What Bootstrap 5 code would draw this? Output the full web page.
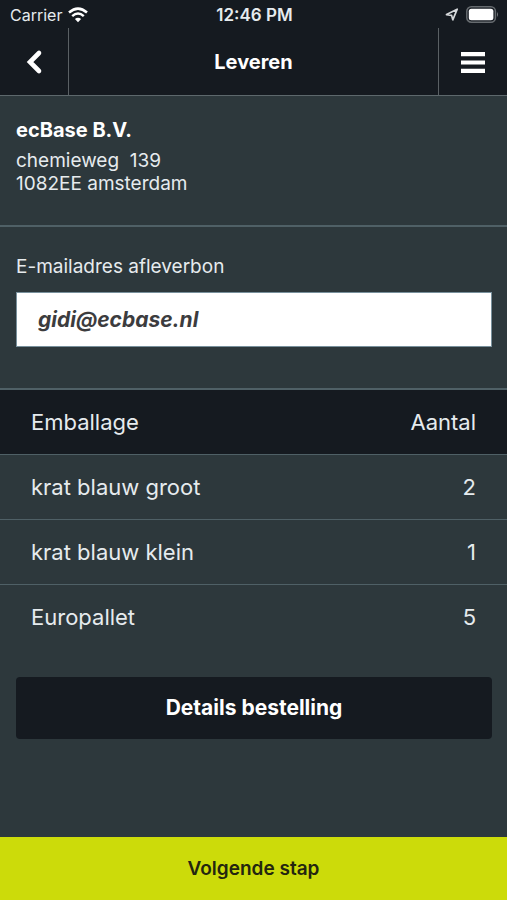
<!DOCTYPE html>
<html lang="nl">
<head>
<meta charset="utf-8">
<meta name="viewport" content="width=device-width, initial-scale=1">
<title>Leveren</title>
<link href="https://cdn.jsdelivr.net/npm/bootstrap@5.3.0/dist/css/bootstrap.min.css" rel="stylesheet">
<style>
  :root { --ink: #151a20; --slate: #2d383c; --rule: #4f6066; --lime: #ccdb0a; --pale: #e6ebee; }
  body { font-family: Inter, "Liberation Sans", sans-serif; background: var(--slate); color: var(--pale); }
  .ink { background: var(--ink); }
  .status { height: 28px; padding: 1px 8px 0 10px; font-size: 16px; line-height: 24px; }
  .status .clock { font-size: 17px; font-weight: 600; }
  .status .side { flex: 1 1 0; }
  .status .left-side { gap: 6px; }
  .topbar { height: 68px; border-bottom: 1px solid #5d686c; }
  .topbar h1 { font-size: 20px; line-height: 24px; font-weight: 700; color: #fff; }
  .topbar .btn { width: 69px; border: 0; border-radius: 0; color: #fff; }
  .topbar .btn-back { border-right: 1px solid #5a6064; }
  .topbar .btn-menu { border-left: 1px solid #5a6064; }
  .address { padding: 22px 16px 30px; border-bottom: 2px solid var(--rule); font-size: 19px; line-height: 23px; }
  .address h2 { font-size: 20px; line-height: 25px; font-weight: 700; color: #fff; margin-bottom: 6px; }
  .mail { padding: 28px 15px 41px 16px; }
  .mail label { font-size: 19px; line-height: 24px; margin-bottom: 13px; }
  .mail input { height: 55px; padding: 0 21px; border: 1px solid #78909c; border-radius: 0; background: #fff; color: #3c3c3e; font-size: 21px; font-weight: 700; font-style: italic; }
  .goods { --bs-table-bg: transparent; --bs-table-color: var(--pale); color: var(--pale); font-size: 22px; line-height: 30px; border-top: 2px solid var(--rule); }
  .goods > * > tr > * { padding: 17px 31px; font-weight: 400; border-bottom: 1px solid var(--rule); }
  .goods > thead > tr > * { background: var(--ink); }
  .goods > tbody > tr:last-child > * { border-bottom: 0; }
  .action { padding: 28px 15px 24px 16px; }
  .details { height: 62px; border: 0; border-radius: 4px; color: #fff; font-size: 21px; font-weight: 700; }
  .next { height: 63px; padding: 8px 0 6px; border: 0; border-radius: 0; background: var(--lime); color: #24260f; font-size: 19px; font-weight: 600; }
</style>
</head>
<body>
<div class="d-flex flex-column min-vh-100">
  <div class="status ink d-flex align-items-center">
    <div class="side left-side d-flex align-items-center">
      <span>Carrier</span>
      <svg width="20" height="16" viewBox="0 0 20 16" fill="none" stroke="#fff" stroke-width="2.5" aria-hidden="true">
        <path d="M1 5.500Q10-2.300 19 5.500M4.200 9.100Q10 4 15.800 9.100"/>
        <path d="M6.900 12Q10 9.400 13.100 12L10 15.200Z" fill="#fff" stroke="none"/>
      </svg>
    </div>
    <span class="clock">12:46 PM</span>
    <div class="side d-flex align-items-center justify-content-end gap-2">
      <svg width="13" height="13" viewBox="0 0 13 13" fill="none" stroke="#d5d8da" stroke-width="1.700" stroke-linejoin="round" aria-hidden="true"><path d="M1.500 6.600 12.200 1.200 7.800 11.800 6.600 7.400Z"/></svg>
      <svg width="33" height="17" viewBox="0 0 33 17" aria-hidden="true">
        <rect x=".8" y=".8" width="28.600" height="15.400" rx="4.500" fill="none" stroke="#666b6f" stroke-width="1.500"/>
        <rect x="2.800" y="2.800" width="24.600" height="11.400" rx="2.500" fill="#fff"/>
        <path d="M31 6q2 2.500 0 5Z" fill="#74787c"/>
      </svg>
    </div>
  </div>
  <header class="topbar ink d-flex align-items-stretch">
    <button type="button" class="btn btn-back p-0" aria-label="Terug">
      <svg width="18" height="26" viewBox="0 0 18 26" fill="none" stroke="#fff" stroke-width="4.600" stroke-linecap="round" aria-hidden="true"><path d="M14 4 5 13 14 22"/></svg>
    </button>
    <h1 class="flex-grow-1 align-self-center text-center mb-0">Leveren</h1>
    <button type="button" class="btn btn-menu p-0" aria-label="Menu">
      <svg width="24" height="22" viewBox="0 0 24 22" fill="#fff" aria-hidden="true"><path d="M0 0h24v4.200H0zM0 8.400h24v4.200H0zM0 16.800h24v4.200H0z"/></svg>
    </button>
  </header>
  <main class="flex-grow-1">
    <section class="address">
      <h2>ecBase B.V.</h2>
      <p class="mb-0">chemieweg&nbsp; 139<br>1082EE amsterdam</p>
    </section>
    <form class="mail">
      <label for="email" class="d-block">E-mailadres afleverbon</label>
      <input type="email" id="email" class="form-control" value="gidi@ecbase.nl">
    </form>
    <table class="table goods mb-0">
      <thead><tr><th scope="col">Emballage</th><th scope="col" class="text-end">Aantal</th></tr></thead>
      <tbody>
        <tr><td>krat blauw groot</td><td class="text-end">2</td></tr>
        <tr><td>krat blauw klein</td><td class="text-end">1</td></tr>
        <tr><td>Europallet</td><td class="text-end">5</td></tr>
      </tbody>
    </table>
    <div class="action">
      <button type="button" class="btn details ink w-100">Details bestelling</button>
    </div>
  </main>
  <button type="button" class="btn next w-100">Volgende stap</button>
</div>
<script src="https://cdn.jsdelivr.net/npm/bootstrap@5.3.0/dist/js/bootstrap.bundle.min.js"></script>
</body>
</html>
